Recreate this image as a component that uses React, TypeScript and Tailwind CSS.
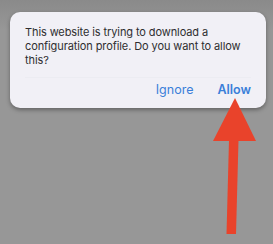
export default function App() {
  return (
    <div className="relative h-[244px] w-[273px] overflow-hidden bg-[#979797] font-['Inter',sans-serif]">
      {/* vignette at top */}
      <div className="pointer-events-none absolute inset-x-0 top-0 h-[30px] bg-gradient-to-b from-[#8a8a8a] to-transparent" />

      <div className="relative ml-[10px] mt-[12px] w-[256px] rounded-[10px] bg-[#f1f0f6] shadow-[0_2px_4px_rgba(0,0,0,0.35)]">
        <p className="px-[15px] pt-[13px] pb-[10px] text-[11px] leading-[14px] tracking-[-0.1px] text-[#2e2e30]">
          This website is trying to download a configuration profile. Do you want to allow this?
        </p>
        <div className="mx-[15px] border-t border-[#ececf2]" />
        <div className="flex items-center justify-end gap-[24px] pr-[15px] pt-[4px] pb-[10px] text-[12.5px] leading-[16px] text-[#3a7fd9]">
          <button type="button">Ignore</button>
          <button type="button" className="font-semibold">Allow</button>
        </div>
      </div>

      {/* red annotation arrow */}
      <svg className="absolute left-0 top-0" width="273" height="244" viewBox="0 0 273 244" aria-hidden="true">
        <polygon points="235,98 256,141 213,141" fill="#e9432b" />
        <polygon points="229,140 238.5,140 236,234 226.5,234" fill="#e9432b" />
      </svg>
    </div>
  );
}
